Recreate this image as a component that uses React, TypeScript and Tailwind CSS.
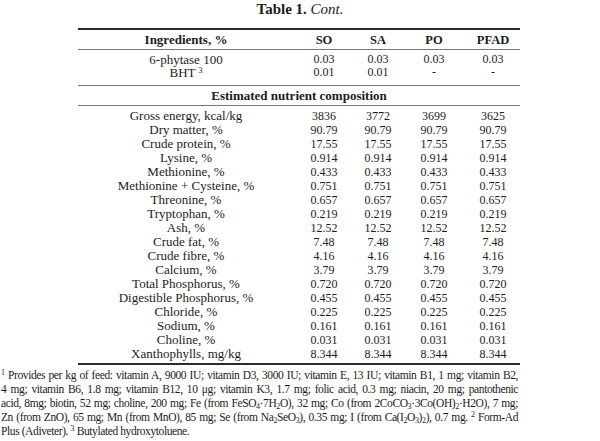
const cols = ["SO", "SA", "PO", "PFAD"];

const nutrients: [string, string, string, string, string][] = [
  ["Gross energy, kcal/kg", "3836", "3772", "3699", "3625"],
  ["Dry matter, %", "90.79", "90.79", "90.79", "90.79"],
  ["Crude protein, %", "17.55", "17.55", "17.55", "17.55"],
  ["Lysine, %", "0.914", "0.914", "0.914", "0.914"],
  ["Methionine, %", "0.433", "0.433", "0.433", "0.433"],
  ["Methionine + Cysteine, %", "0.751", "0.751", "0.751", "0.751"],
  ["Threonine, %", "0.657", "0.657", "0.657", "0.657"],
  ["Tryptophan, %", "0.219", "0.219", "0.219", "0.219"],
  ["Ash, %", "12.52", "12.52", "12.52", "12.52"],
  ["Crude fat, %", "7.48", "7.48", "7.48", "7.48"],
  ["Crude fibre, %", "4.16", "4.16", "4.16", "4.16"],
  ["Calcium, %", "3.79", "3.79", "3.79", "3.79"],
  ["Total Phosphorus, %", "0.720", "0.720", "0.720", "0.720"],
  ["Digestible Phosphorus, %", "0.455", "0.455", "0.455", "0.455"],
  ["Chloride, %", "0.225", "0.225", "0.225", "0.225"],
  ["Sodium, %", "0.161", "0.161", "0.161", "0.161"],
  ["Choline, %", "0.031", "0.031", "0.031", "0.031"],
  ["Xanthophylls, mg/kg", "8.344", "8.344", "8.344", "8.344"],
];

const grid = "grid grid-cols-[216px_60px_48px_64px_54px] text-center";

// plain spans so preflight's sub/sup offsets don't stack with ours
function Sub({ children }: { children: React.ReactNode }) {
  return <span className="relative top-[2px] text-[8px] leading-none">{children}</span>;
}

function Sup({ children }: { children: React.ReactNode }) {
  return <span className="relative -top-[4px] text-[8px] leading-none">{children}</span>;
}

const line = "text-justify [text-align-last:justify]";

export default function App() {
  return (
    <div className="w-[600px] h-[441px] overflow-hidden bg-white text-[#1c1c1c] font-['Liberation_Serif',serif]">
      <p className="text-center text-[15px] leading-[18px]">
        <span className="font-bold">Table 1.</span> <span className="italic">Cont.</span>
      </p>

      <div className="mt-[10px] ml-[78px] w-[442px] border-y-2 border-[#2a2a2a] text-[12px]">
        <div className={`${grid} h-[20px] leading-[20px] font-bold text-[12.5px] border-b border-[#777]`}>
          <div className="text-[13px]">Ingredients, %</div>
          {cols.map((c) => (
            <div key={c}>{c}</div>
          ))}
        </div>

        <div className="pt-[3px] pb-[6px] leading-[13px] border-b border-[#777]">
          <div className={grid}>
            <div className="text-[13px]">6-phytase 100</div>
            <div>0.03</div>
            <div>0.03</div>
            <div>0.03</div>
            <div>0.03</div>
          </div>
          <div className={grid}>
            <div className="text-[13px]">
              BHT <Sup>3</Sup>
            </div>
            <div>0.01</div>
            <div>0.01</div>
            <div>-</div>
            <div>-</div>
          </div>
        </div>

        <div className="h-[20px] leading-[20px] font-bold text-center text-[13px] border-b border-[#777]">
          Estimated nutrient composition
        </div>

        <div className="pt-[3px] pb-[2px] leading-[14px]">
          {nutrients.map((row) => (
            <div key={row[0]} className={grid}>
              {row.map((v, i) => (
                <div key={i} className={i === 0 ? "text-[13px]" : ""}>
                  {v}
                </div>
              ))}
            </div>
          ))}
        </div>
      </div>

      <div className="mt-[3px] ml-[1px] w-[517px] text-[11.5px] leading-[14px] tracking-[-0.4px]">
        <div className={line}>
          <Sup>1</Sup> Provides per kg of feed: vitamin A, 9000 IU; vitamin D3, 3000 IU; vitamin E, 13 IU;
          vitamin B1, 1 mg; vitamin B2,
        </div>
        <div className={line}>
          4 mg; vitamin B6, 1.8 mg; vitamin B12, 10 μg; vitamin K3, 1.7 mg; folic acid, 0.3 mg; niacin, 20 mg;
          pantothenic
        </div>
        <div className={line}>
          acid, 8mg; biotin, 52 mg; choline, 200 mg; Fe (from FeSO<Sub>4</Sub>·7H<Sub>2</Sub>O), 32 mg; Co (from
          2CoCO<Sub>3</Sub>·3Co(OH)<Sub>2</Sub>·H2O), 7 mg;
        </div>
        <div className={line}>
          Zn (from ZnO), 65 mg; Mn (from MnO), 85 mg; Se (from Na<Sub>2</Sub>SeO<Sub>3</Sub>), 0.35 mg; I (from
          Ca(I<Sub>2</Sub>O<Sub>3</Sub>)<Sub>2</Sub>), 0.7 mg. <Sup>2</Sup> Form-Ad
        </div>
        <div>
          Plus (Adiveter). <Sup>3</Sup> Butylated hydroxytoluene.
        </div>
      </div>
    </div>
  );
}
